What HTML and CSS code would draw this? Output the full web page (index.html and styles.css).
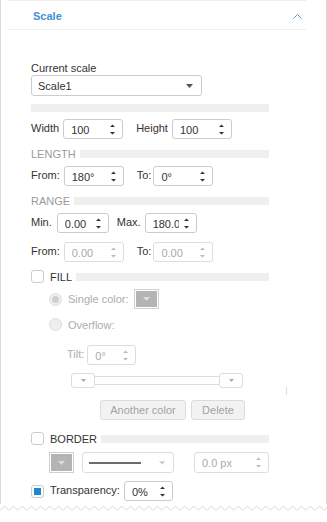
FILE: index.html
```html
<!DOCTYPE html>
<html lang="en">
<head>
  <meta charset="UTF-8">
  <title>Scale</title>
  <link rel="stylesheet" href="styles.css">
</head>
<body>
  <div class="panel">
    <div class="section">
      <div class="sec-head">
        <span class="sec-title">Scale</span>
        <svg class="chev" width="9" height="5" viewBox="0 0 9 5"><path d="M0.5 4.5 L4.5 0.5 L8.5 4.5" fill="none" stroke="#4a9ad8"/></svg>
      </div>

      <div class="sec-body">
        <div class="lbl">Current scale</div>
        <div class="select">
          <span>Scale1</span>
          <svg width="7" height="4" viewBox="0 0 7 4"><path d="M0 0 L7 0 L3.5 4 Z" fill="#555"/></svg>
        </div>
        <div class="bar bar-top"></div>

        <div class="row mt7">
          <span class="lbl">Width</span>
          <div class="spin w60"><span class="val">100</span><svg class="arr" width="7" height="13" viewBox="0 0 7 13"><path d="M1 4 L3.5 1.5 L6 4 Z M1 9 L3.5 11.5 L6 9 Z" fill="#333"/></svg></div>
          <span class="lbl gap13">Height</span>
          <div class="spin w60"><span class="val">100</span><svg class="arr" width="7" height="13" viewBox="0 0 7 13"><path d="M1 4 L3.5 1.5 L6 4 Z M1 9 L3.5 11.5 L6 9 Z" fill="#333"/></svg></div>
        </div>

        <div class="group mt8"><span class="muted">LENGTH</span><div class="bar"></div></div>

        <div class="row mt6">
          <span class="lbl">From:</span>
          <div class="spin w60"><span class="val">180°</span><svg class="arr" width="7" height="13" viewBox="0 0 7 13"><path d="M1 4 L3.5 1.5 L6 4 Z M1 9 L3.5 11.5 L6 9 Z" fill="#333"/></svg></div>
          <span class="lbl gap13 tight">To:</span>
          <div class="spin w60"><span class="val">0°</span><svg class="arr" width="7" height="13" viewBox="0 0 7 13"><path d="M1 4 L3.5 1.5 L6 4 Z M1 9 L3.5 11.5 L6 9 Z" fill="#333"/></svg></div>
        </div>

        <div class="group mt8"><span class="muted">RANGE</span><div class="bar"></div></div>

        <div class="row mt6">
          <span class="lbl wide">Min.</span>
          <div class="spin w52"><span class="val">0.00</span><svg class="arr" width="7" height="13" viewBox="0 0 7 13"><path d="M1 4 L3.5 1.5 L6 4 Z M1 9 L3.5 11.5 L6 9 Z" fill="#333"/></svg></div>
          <span class="lbl gap8">Max.</span>
          <div class="spin w52"><span class="val">180.0</span><svg class="arr" width="7" height="13" viewBox="0 0 7 13"><path d="M1 4 L3.5 1.5 L6 4 Z M1 9 L3.5 11.5 L6 9 Z" fill="#333"/></svg></div>
        </div>

        <div class="row mt9">
          <span class="lbl">From:</span>
          <div class="spin w60 off"><span class="val">0.00</span><svg class="arr" width="7" height="13" viewBox="0 0 7 13"><path d="M1 4 L3.5 1.5 L6 4 Z M1 9 L3.5 11.5 L6 9 Z" fill="#bbb"/></svg></div>
          <span class="lbl gap13 tight">To:</span>
          <div class="spin w60 off"><span class="val">0.00</span><svg class="arr" width="7" height="13" viewBox="0 0 7 13"><path d="M1 4 L3.5 1.5 L6 4 Z M1 9 L3.5 11.5 L6 9 Z" fill="#bbb"/></svg></div>
        </div>

        <div class="group mt8">
          <span class="check"></span>
          <span class="check-text">FILL</span>
          <div class="bar"></div>
        </div>

        <div class="sub-row mt6">
          <span class="radio on"></span>
          <span class="dim">Single color:</span>
          <div class="swatch"><svg width="7" height="4" viewBox="0 0 7 4"><path d="M0 0 L7 0 L3.5 4 Z" fill="#ddd"/></svg></div>
        </div>

        <div class="sub-row mt9">
          <span class="radio"></span>
          <span class="dim">Overflow:</span>
        </div>

        <div class="row tilt-row">
          <span class="dim lbl-tilt">Tilt:</span>
          <div class="spin w50 off"><span class="val">0°</span><svg class="arr" width="7" height="13" viewBox="0 0 7 13"><path d="M1 4 L3.5 1.5 L6 4 Z M1 9 L3.5 11.5 L6 9 Z" fill="#bbb"/></svg></div>
        </div>

        <div class="slider-row">
          <div class="mini-sel"><svg width="5" height="3" viewBox="0 0 5 3"><path d="M0 0 L5 0 L2.5 3 Z" fill="#aaa"/></svg></div>
          <div class="track"></div>
          <div class="mini-sel"><svg width="5" height="3" viewBox="0 0 5 3"><path d="M0 0 L5 0 L2.5 3 Z" fill="#aaa"/></svg></div>
        </div>

        <div class="btn-row">
          <div class="btn btn-add">Another color</div>
          <div class="btn btn-del">Delete</div>
        </div>

        <div class="group mt12">
          <span class="check"></span>
          <span class="check-text">BORDER</span>
          <div class="bar"></div>
        </div>

        <div class="border-row">
          <div class="swatch tall"><svg width="7" height="4" viewBox="0 0 7 4"><path d="M0 0 L7 0 L3.5 4 Z" fill="#ddd"/></svg></div>
          <div class="line-sel">
            <span class="line"></span>
            <svg width="7" height="4" viewBox="0 0 7 4"><path d="M0 0 L7 0 L3.5 4 Z" fill="#ccc"/></svg>
          </div>
          <div class="spin w74 tall off"><span class="val">0.0 px</span><svg class="arr" width="7" height="13" viewBox="0 0 7 13"><path d="M1 4 L3.5 1.5 L6 4 Z M1 9 L3.5 11.5 L6 9 Z" fill="#bbb"/></svg></div>
        </div>

        <div class="row mt8">
          <span class="check checked"></span>
          <span class="lbl check-label">Transparency:</span>
          <div class="spin w50"><span class="val">0%</span><svg class="arr" width="7" height="13" viewBox="0 0 7 13"><path d="M1 4 L3.5 1.5 L6 4 Z M1 9 L3.5 11.5 L6 9 Z" fill="#333"/></svg></div>
        </div>
      </div>
    </div>
    <div class="tick"></div>
  </div>
  <svg class="torn" width="327" height="9" viewBox="0 0 327 9">
    <defs>
      <pattern id="zig" width="9" height="9" patternUnits="userSpaceOnUse">
        <path d="M0 6.5 L4.5 2 L9 6.5" fill="none" stroke="#d6d6d6"/>
      </pattern>
    </defs>
    <rect width="327" height="9" fill="url(#zig)"/>
  </svg>
</body>
</html>
```

FILE: styles.css
```css
body {
  margin: 0;
  background: #fff;
  font-family: "Liberation Sans", Arial, sans-serif;
  font-size: 11px;
  color: #333;
}
.panel {
  position: relative;
  width: 325px;
  height: 504px;
  border-left: 1px solid #dcdcdc;
  border-right: 1px solid #dcdcdc;
}
.section {
  margin: 0 20px 0 7px;
  border-top: 1px solid #eee;
}
.sec-head {
  height: 26px;
  padding: 2px 4px 0 25px;
  border-bottom: 1px solid #eee;
  display: flex;
  align-items: center;
  justify-content: space-between;
}
.sec-title {
  font-weight: bold;
  color: #3f8fd2;
}
.sec-body {
  width: 238px;
  padding: 32px 0 0 23px;
}
.lbl {
  line-height: 13px;
}
.select {
  box-sizing: border-box;
  height: 21px;
  width: 171px;
  border: 1px solid #ccc;
  border-radius: 3px;
  display: flex;
  align-items: center;
  justify-content: space-between;
  padding: 1px 8px 0 6px;
}
.bar {
  flex: 1;
  height: 8px;
  background: #efefef;
  margin-left: 4px;
}
.bar-top {
  margin: 8px 0 0 0;
}
.row {
  display: flex;
  align-items: center;
  height: 20px;
}
.row .lbl {
  margin: 0 4px 2px 0;
}
.row .lbl.tight {
  margin-right: 2px;
}
.row .lbl.wide {
  margin-right: 5px;
}
.row .lbl.check-label {
  margin-left: 6px;
}
.gap13 { margin-left: 13px !important; }
.gap8 { margin-left: 8px !important; }
.mt6 { margin-top: 6px; }
.mt7 { margin-top: 7px; }
.mt8 { margin-top: 8px; }
.mt9 { margin-top: 9px; }
.mt12 { margin-top: 12px; }

.spin {
  box-sizing: border-box;
  height: 20px;
  border: 1px solid #ccc;
  border-radius: 3px;
  display: flex;
  align-items: center;
  padding: 1px 6px 0 7px;
}
.spin .val {
  flex: 1;
  min-width: 0;
  overflow: hidden;
  white-space: nowrap;
  margin-right: 4px;
}
.spin .arr {
  flex: none;
  margin-top: -1px;
}
.spin.off {
  border-color: #ddd;
  color: #aaa;
}
.spin.tall {
  height: 21px;
}
.w50 { width: 49px; }
.w52 { width: 52px; }
.w60 { width: 60px; }
.w74 { width: 75px; }

.group {
  display: flex;
  align-items: center;
  height: 13px;
}
.muted {
  color: #9a9a9a;
}
.check {
  box-sizing: border-box;
  width: 13px;
  height: 13px;
  border: 1px solid #ccc;
  border-radius: 3px;
  display: flex;
  align-items: center;
  justify-content: center;
  flex: none;
}
.check.checked::after {
  content: "";
  width: 7px;
  height: 7px;
  background: #1f88d2;
}
.check-text {
  margin-left: 6px;
}

.sub-row {
  display: flex;
  align-items: center;
  padding-left: 18px;
  min-height: 13px;
}
.radio {
  box-sizing: border-box;
  width: 13px;
  height: 13px;
  border-radius: 50%;
  border: 1px solid #ddd;
  background: #eee;
  display: flex;
  align-items: center;
  justify-content: center;
  margin-right: 6px;
}
.radio.on::after {
  content: "";
  width: 7px;
  height: 7px;
  border-radius: 50%;
  background: #cfcfcf;
}
.dim {
  color: #adadad;
}
.swatch {
  box-sizing: border-box;
  width: 25px;
  height: 20px;
  margin-left: 5px;
  border: 1px solid #d0d0d0;
  box-shadow: inset 0 0 0 1px #fff;
  background: #b4b4b4;
  display: flex;
  align-items: center;
  justify-content: center;
}
.swatch.tall {
  height: 21px;
  margin-left: 0;
}

.tilt-row {
  margin-top: 14px;
  padding-left: 36px;
}
.lbl-tilt {
  margin: 0 3px 2px 0;
}

.slider-row {
  display: flex;
  align-items: center;
  margin: 8px 0 0 40px;
  height: 15px;
}
.mini-sel {
  box-sizing: border-box;
  width: 24px;
  height: 15px;
  border: 1px solid #ddd;
  border-radius: 3px;
  display: flex;
  align-items: center;
  justify-content: center;
}
.track {
  box-sizing: border-box;
  width: 124px;
  height: 9px;
  border-top: 1px solid #ddd;
  border-bottom: 1px solid #ddd;
}

.btn-row {
  display: flex;
  gap: 5px;
  margin: 12px 0 0 69px;
}
.btn {
  box-sizing: border-box;
  height: 20px;
  border: 1px solid #dcdcdc;
  border-radius: 3px;
  background: #f2f2f2;
  color: #a3a3a3;
  display: flex;
  align-items: center;
  justify-content: center;
}
.btn-add { width: 86px; }
.btn-del { width: 54px; }

.border-row {
  display: flex;
  align-items: center;
  margin: 7px 0 0 18px;
}
.line-sel {
  box-sizing: border-box;
  width: 92px;
  height: 21px;
  margin: 0 20px 0 8px;
  border: 1px solid #ddd;
  border-radius: 3px;
  display: flex;
  align-items: center;
  padding: 0 8px 0 6px;
}
.line-sel .line {
  width: 57px;
  height: 2px;
  background: #6b6b6b;
  margin-right: 18px;
}

.tick {
  position: absolute;
  left: 285px;
  top: 387px;
  width: 1px;
  height: 8px;
  background: #ddd;
}
.torn {
  display: block;
}
```
